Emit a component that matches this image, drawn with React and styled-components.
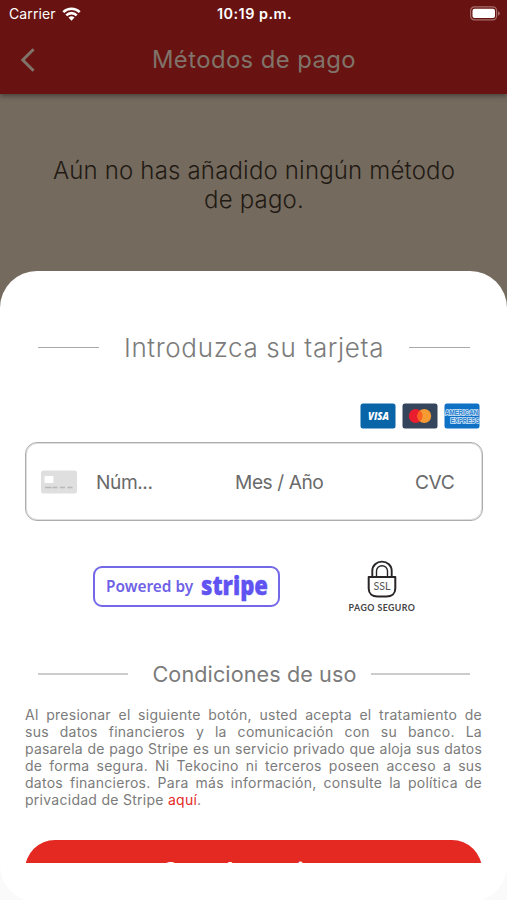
import React from "react";
import styled, { createGlobalStyle } from "styled-components";

const Global = createGlobalStyle`
  * { box-sizing: border-box; }
  body { margin: 0; background: #fafafa; }
  svg { display: block; flex: none; }
`;

const Screen = styled.main`
  width: 507px;
  height: 900px;
  display: flex;
  flex-direction: column;
  overflow: hidden;
  font-family: Inter, "Liberation Sans", sans-serif;
  background: linear-gradient(#756a5e 0 500px, #fafafa 500px);
`;

const TopBar = styled.header`
  flex: none;
  height: 94px;
  background: #681311;
  box-shadow: 0 2px 5px rgba(0, 0, 0, 0.4);
`;

const StatusBar = styled.div`
  height: 27px;
  display: grid;
  grid-template-columns: 1fr auto 1fr;
  align-items: center;
  padding: 0 7px 0 9px;
  color: #fff;
`;

const Carrier = styled.div`
  display: flex;
  align-items: center;
  gap: 6px;
  font-size: 14px;
  letter-spacing: 0.1px;
`;

const Clock = styled.div`
  font-size: 14.4px;
  font-weight: 600;
  letter-spacing: 0.5px;
`;

const BatterySlot = styled.div`
  justify-self: end;
`;

const NavBar = styled.div`
  height: 65px;
  display: grid;
  grid-template-columns: 60px 1fr 59px;
  align-items: center;
`;

const BackButton = styled.button`
  border: 0;
  background: none;
  padding: 0 0 0 20px;
`;

const Title = styled.h1`
  margin: 0;
  text-align: center;
  font-size: 23.8px;
  line-height: 30px;
  font-weight: 400;
  letter-spacing: 0.45px;
  color: #80736a;
`;

const EmptyMessage = styled.p`
  flex: none;
  height: 177px;
  margin: 0;
  padding: 62px 39px 0 40px;
  text-align: center;
  font-size: 24px;
  line-height: 29px;
  font-weight: 300;
  letter-spacing: 0.17px;
  color: #211a14;
`;

const Sheet = styled.section`
  flex: none;
  height: 631px;
  border-radius: 37px;
  background: #fff;
  padding: 0 25px;
`;

const Heading = styled.div`
  display: flex;
  align-items: center;
  padding: 0 12px 0 13px;
  height: ${(p) => p.$height}px;
  margin-top: ${(p) => p.$top}px;
`;

const Rule = styled.span`
  width: ${(p) => p.$width}px;
  height: ${(p) => p.$thick || 1}px;
  background: ${(p) => p.$color || "#aaa"};
`;

const HeadingText = styled.h2`
  flex: 1;
  margin: 0;
  padding-left: ${(p) => p.$shift || 0}px;
  text-align: center;
  white-space: nowrap;
  font-weight: ${(p) => p.$weight};
  font-size: ${(p) => p.$size}px;
  letter-spacing: ${(p) => p.$spacing}px;
  color: #7b7b7b;
`;

const Brands = styled.div`
  display: flex;
  justify-content: flex-end;
  gap: 6px;
  margin-top: 39px;
  padding-right: 2px;
`;

const CardForm = styled.div`
  display: flex;
  align-items: center;
  height: 79px;
  width: 458px;
  margin-top: 13px;
  padding-left: 15px;
  border: 1px solid #adadad;
  box-shadow: inset 0 0 0 1px #dedede;
  border-radius: 12px;
`;

const Field = styled.span`
  font-size: 19.2px;
  letter-spacing: -0.45px;
  margin-left: ${(p) => p.$gap}px;
  width: ${(p) => p.$width}px;
  white-space: nowrap;
  color: #6a6a6a;
`;

const TrustRow = styled.div`
  display: flex;
  align-items: flex-start;
  height: 56px;
  margin-top: 39px;
  padding-left: 68px;
`;

const StripeBadge = styled.div`
  display: flex;
  align-items: center;
  width: 187px;
  height: 41px;
  margin-top: 6px;
  padding-left: 11px;
  border: 2px solid #7468e8;
  border-radius: 9px;
`;

const PoweredBy = styled.span`
  width: 94px;
  font-family: "Noto Sans", sans-serif;
  font-size: 15.4px;
  font-weight: 600;
  white-space: nowrap;
  color: #6f62e6;
`;

const Secure = styled.div`
  display: flex;
  flex-direction: column;
  align-items: center;
  width: 80px;
  margin-left: 62px;
`;

const SecureLabel = styled.span`
  margin-top: 4px;
  font-family: Lato, sans-serif;
  font-size: 8.8px;
  line-height: 11px;
  font-weight: 700;
  letter-spacing: 0.45px;
  white-space: nowrap;
  color: #444;
`;

const Terms = styled.p`
  width: 457px;
  height: 102px;
  margin: 16px 0 0;
  font-size: 14px;
  line-height: 17.1px;
  letter-spacing: 0.27px;
  color: #7b7b7b;
`;

const TermsLine = styled.span`
  display: block;
  white-space: nowrap;
  text-align-last: ${(p) => (p.$last ? "left" : "justify")};
  word-spacing: ${(p) => (p.$tight ? "-1.5px" : "normal")};
  letter-spacing: ${(p) => (p.$tight ? "0.2px" : "inherit")};
`;

const Link = styled.a`
  color: #e32a26;
`;

const ButtonViewport = styled.div`
  width: 457px;
  height: 23px;
  margin-top: 32px;
  overflow: hidden;
`;

const SaveButton = styled.button`
  display: block;
  width: 457px;
  height: 60px;
  padding: 2px 4px 0 0;
  border: 0;
  border-radius: 30px;
  background: #e42923;
  color: #fff;
  font-family: Inter, sans-serif;
  font-size: 24px;
  font-weight: 700;
  letter-spacing: 0.2px;
`;

const WifiIcon = () => (
  <svg width="19" height="14" viewBox="0 0 19 14" fill="none" stroke="#fff" strokeWidth="2.6">
    <path d="M1.3 5.1a11.6 11.6 0 0 1 16.4 0M4.3 8.3a7.4 7.4 0 0 1 10.4 0" />
    <path d="M9.5 13.7 6.5 10.6a4.3 4.3 0 0 1 6 0Z" fill="#fff" stroke="none" />
  </svg>
);

const BatteryIcon = () => (
  <svg width="30" height="15" viewBox="0 0 30 15">
    <rect x=".6" y=".9" width="26" height="13" rx="3.8" fill="none" stroke="#a46d6b" strokeWidth="1.2" />
    <rect x="2.5" y="2.8" width="22.5" height="9.2" rx="2" fill="#fff" />
    <path d="M28 5.2c2.4.8 2.4 3.6 0 4.4Z" fill="#a46d6b" />
  </svg>
);

const BackIcon = () => (
  <svg width="16" height="24" viewBox="0 0 16 24" fill="none" stroke="#80736a" strokeWidth="3">
    <path d="M13.6 1.2 2.8 12l10.8 10.8" />
  </svg>
);

const Visa = () => (
  <svg width="36" height="26" viewBox="0 0 36 26">
    <rect x=".5" y=".5" width="35" height="25" rx="2.5" fill="#0865a7" />
    <text x="8" y="17" fill="#fff" fontFamily="Open Sans" fontSize="10.5" fontWeight="800" fontStyle="italic" textLength="21" lengthAdjust="spacingAndGlyphs">VISA</text>
  </svg>
);

const Mastercard = () => (
  <svg width="36" height="26" viewBox="0 0 36 26">
    <rect x=".5" y=".5" width="35" height="25" rx="2.5" fill="#35455b" />
    <circle cx="13.7" cy="13" r="6.9" fill="#e91d2d" />
    <circle cx="22.3" cy="13" r="6.9" fill="#f69a32" />
    <path d="M18 7.6a6.9 6.9 0 0 1 0 10.8 6.9 6.9 0 0 1 0-10.8Z" fill="#fa6022" />
  </svg>
);

const Amex = () => (
  <svg width="36" height="26" viewBox="0 0 36 26">
    <rect x=".5" y=".5" width="35" height="25" rx="2.5" fill="#0e71c6" />
    <g fill="#2a80cd" stroke="#cfe4f7" strokeWidth="1.6" paintOrder="stroke" fontFamily="Liberation Sans" fontWeight="700" fontSize="6.3">
      <text x="1" y="11.8" textLength="33" lengthAdjust="spacingAndGlyphs">AMERICAN</text>
      <text x="6.5" y="20.3" textLength="29" lengthAdjust="spacingAndGlyphs">EXPRESS</text>
    </g>
  </svg>
);

const CardIcon = () => (
  <svg width="36" height="24" viewBox="0 0 36 24">
    <rect width="36" height="23" y=".5" rx="2.5" fill="#dfdfdf" />
    <rect x="3.5" y="6" width="9" height="7" rx="1.3" fill="#fff" />
    <path d="M4 17.5h6.5m1 0h5m2.5 0h5m2.5 0h5" stroke="#b8b8b8" strokeWidth="1.6" />
  </svg>
);

const StripeLogo = () => (
  <svg width="69" height="37" viewBox="0 0 69 37">
    <text x="1" y="27" fill="#6053f2" stroke="#6053f2" strokeWidth=".4" fontFamily="Open Sans" fontSize="26.5" fontWeight="800" textLength="67" lengthAdjust="spacingAndGlyphs">stripe</text>
  </svg>
);

const LockIcon = () => (
  <svg width="30" height="38" viewBox="0 0 30 38" fill="none" stroke="#292425">
    <path d="M5.3 16v-5.2a9.7 9.2 0 0 1 19.4 0V16" strokeWidth="1.9" />
    <path d="M9.5 16v-5a5.5 5.3 0 0 1 11 0v5" strokeWidth="1.4" />
    <path d="M1.7 17h26.6v11.5c0 5-3.7 8-8.8 8h-9c-5.1 0-8.8-3-8.8-8Z" strokeWidth="2" strokeLinejoin="round" />
    <text x="6.5" y="30.3" fill="#555" stroke="none" fontFamily="Lato" fontSize="10.5" textLength="17" lengthAdjust="spacingAndGlyphs">SSL</text>
  </svg>
);

export default function App() {
  return (
    <Screen>
      <Global />
      <TopBar>
        <StatusBar>
          <Carrier>Carrier<WifiIcon /></Carrier>
          <Clock>10:19 p.m.</Clock>
          <BatterySlot><BatteryIcon /></BatterySlot>
        </StatusBar>
        <NavBar>
          <BackButton aria-label="Volver"><BackIcon /></BackButton>
          <Title>Métodos de pago</Title>
        </NavBar>
      </TopBar>
      <EmptyMessage>Aún no has añadido ningún método de pago.</EmptyMessage>
      <Sheet>
        <Heading $top={60} $height={33}>
          <Rule $width={61} />
          <HeadingText $size={26} $weight={300} $spacing={0.65}>Introduzca su tarjeta</HeadingText>
          <Rule $width={61} />
        </Heading>
        <Brands><Visa /><Mastercard /><Amex /></Brands>
        <CardForm>
          <CardIcon />
          <Field $gap={19} $width={119}>Núm...</Field>
          <Field $gap={20} $width={160}>Mes / Año</Field>
          <Field $gap={20} $width={50}>CVC</Field>
        </CardForm>
        <TrustRow>
          <StripeBadge>
            <PoweredBy>Powered by</PoweredBy>
            <StripeLogo />
          </StripeBadge>
          <Secure><LockIcon /><SecureLabel>PAGO SEGURO</SecureLabel></Secure>
        </TrustRow>
        <Heading $top={42} $height={32}>
          <Rule $width={90} $thick={2} $color="#ccc" />
          <HeadingText $size={21.6} $weight={400} $spacing={0.1} $shift={10}>Condiciones de uso</HeadingText>
          <Rule $width={99} $thick={2} $color="#ccc" />
        </Heading>
        <Terms>
          <TermsLine>Al presionar el siguiente botón, usted acepta el tratamiento de</TermsLine>
          <TermsLine>sus datos financieros y la comunicación con su banco. La</TermsLine>
          <TermsLine $tight>pasarela de pago Stripe es un servicio privado que aloja sus datos</TermsLine>
          <TermsLine>de forma segura. Ni Tekocino ni terceros poseen acceso a sus</TermsLine>
          <TermsLine>datos financieros. Para más información, consulte la política de</TermsLine>
          <TermsLine $last>privacidad de Stripe <Link>aquí</Link>.</TermsLine>
        </Terms>
        <ButtonViewport><SaveButton>Guardar tarjeta</SaveButton></ButtonViewport>
      </Sheet>
    </Screen>
  );
}
